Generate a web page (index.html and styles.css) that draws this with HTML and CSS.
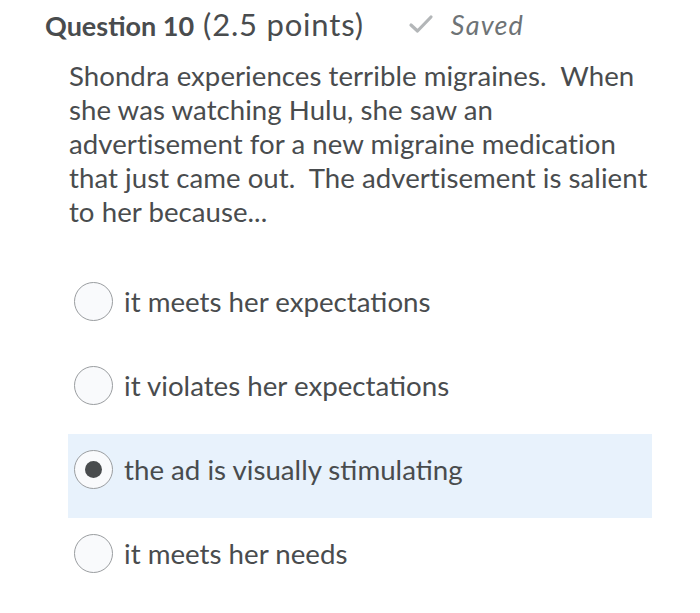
FILE: index.html
```html
<!DOCTYPE html>
<html>
<head>
<meta charset="utf-8">
<link rel="stylesheet" href="styles.css">
</head>
<body>
<div class="page">
  <div class="header">
    <h2 class="title"><span class="qnum">Question 10</span> <span class="points">(2.5 points)</span></h2>
    <div class="saved">
      <svg class="check" width="26" height="20" viewBox="0 0 26 20"><path d="M3 11 L9.5 17 L23 3" fill="none" stroke="#b3b6b8" stroke-width="3.2" stroke-linecap="round" stroke-linejoin="round"/></svg>
      <span class="saved-text">Saved</span>
    </div>
  </div>
  <p class="question">Shondra experiences terrible migraines.&nbsp; When she was watching Hulu, she saw an advertisement for a new migraine medication that just came out.&nbsp; The advertisement is salient to her because...</p>
  <div class="options">
    <label class="option"><span class="radio"></span><span class="opt-text">it meets her expectations</span></label>
    <label class="option"><span class="radio"></span><span class="opt-text">it violates her expectations</span></label>
    <label class="option selected"><span class="radio checked"></span><span class="opt-text">the ad is visually stimulating</span></label>
    <label class="option"><span class="radio"></span><span class="opt-text">it meets her needs</span></label>
  </div>
</div>
</body>
</html>
```

FILE: styles.css
```css
html, body {
  margin: 0;
  padding: 0;
  background: #ffffff;
}
body {
  font-family: Lato, "Open Sans", sans-serif;
  color: #494c4e;
}
.page {
  padding: 4px 0 0 45px;
}
.header {
  display: flex;
  align-items: center;
  height: 40px;
}
.title {
  margin: 0;
  font-size: 27px;
  font-weight: 400;
  white-space: nowrap;
}
.qnum {
  font-weight: 700;
}
.points {
  font-size: 31px;
  letter-spacing: 0.8px;
  margin-left: 2px;
}
.saved {
  display: flex;
  align-items: center;
  margin-left: 44px;
  color: #6e7376;
}
.check {
  display: block;
  margin-right: 17px;
}
.saved-text {
  font-style: italic;
  font-size: 27px;
  letter-spacing: 1.2px;
}
.question {
  margin: 15px 0 0 24px;
  width: 592px;
  font-size: 27.6px;
  line-height: 34px;
  letter-spacing: 0.05px;
}
.options {
  margin: 37px 0 0 23px;
  width: 584px;
  display: flex;
  flex-direction: column;
}
.option {
  box-sizing: border-box;
  display: flex;
  align-items: center;
  height: 84px;
  padding: 0 0 13px 6px;
  font-size: 27.7px;
}
.option.selected {
  background: #e8f2fc;
}
.radio {
  box-sizing: border-box;
  width: 39px;
  height: 39px;
  border-radius: 50%;
  border: 1.5px solid #9a9da0;
  background: #f9fafc;
  display: flex;
  align-items: center;
  justify-content: center;
  flex: none;
  margin-right: 11px;
}
.radio.checked::after {
  content: "";
  width: 17px;
  height: 17px;
  border-radius: 50%;
  background: #494c4e;
}
.opt-text {
  white-space: nowrap;
}
```
